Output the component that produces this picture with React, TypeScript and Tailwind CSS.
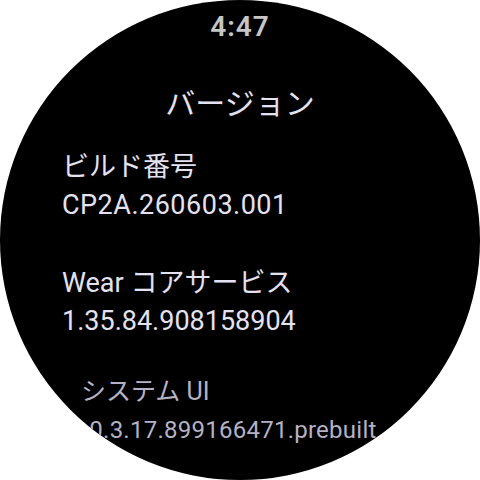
const font = { fontFamily: '"Roboto", "Noto Sans CJK JP", sans-serif' }

function Item({
  label,
  value,
  className,
  valueClass,
}: {
  label: string
  value: string
  className?: string
  valueClass?: string
}) {
  return (
    <div className={className}>
      <div className="leading-[38px]">{label}</div>
      <div className={"leading-[38px] whitespace-nowrap " + (valueClass ?? "")}>{value}</div>
    </div>
  )
}

export default function App() {
  return (
    <div className="w-[480px] h-[480px] bg-white" style={font}>
      <div className="w-[480px] h-[480px] rounded-full bg-black overflow-hidden flex flex-col">
        <div className="pt-[12px] text-center text-[28px] font-semibold leading-[30px] tracking-[1px] text-[#c6c6c6]">
          4:47
        </div>
        <div className="mt-[42px] text-center text-[30px] leading-[40px] text-[#e4e2f0]">
          バージョン
        </div>
        <div className="pl-[62px] text-[27px] text-[#e4e2f0]">
          <Item className="mt-[24px]" label="ビルド番号" value="CP2A.260603.001" valueClass="tracking-[0.5px]" />
          <Item className="mt-[40px]" label="Wear コアサービス" value="1.35.84.908158904" />
          <Item
            className="mt-[33px] text-[25px] text-[#b4b2c4] pl-[19px]"
            label="システム UI"
            value="7.0.3.17.899166471.prebuilt"
            valueClass="text-[24px] tracking-[0.25px] -ml-[12px] leading-[24px]"
          />
        </div>
      </div>
    </div>
  )
}
